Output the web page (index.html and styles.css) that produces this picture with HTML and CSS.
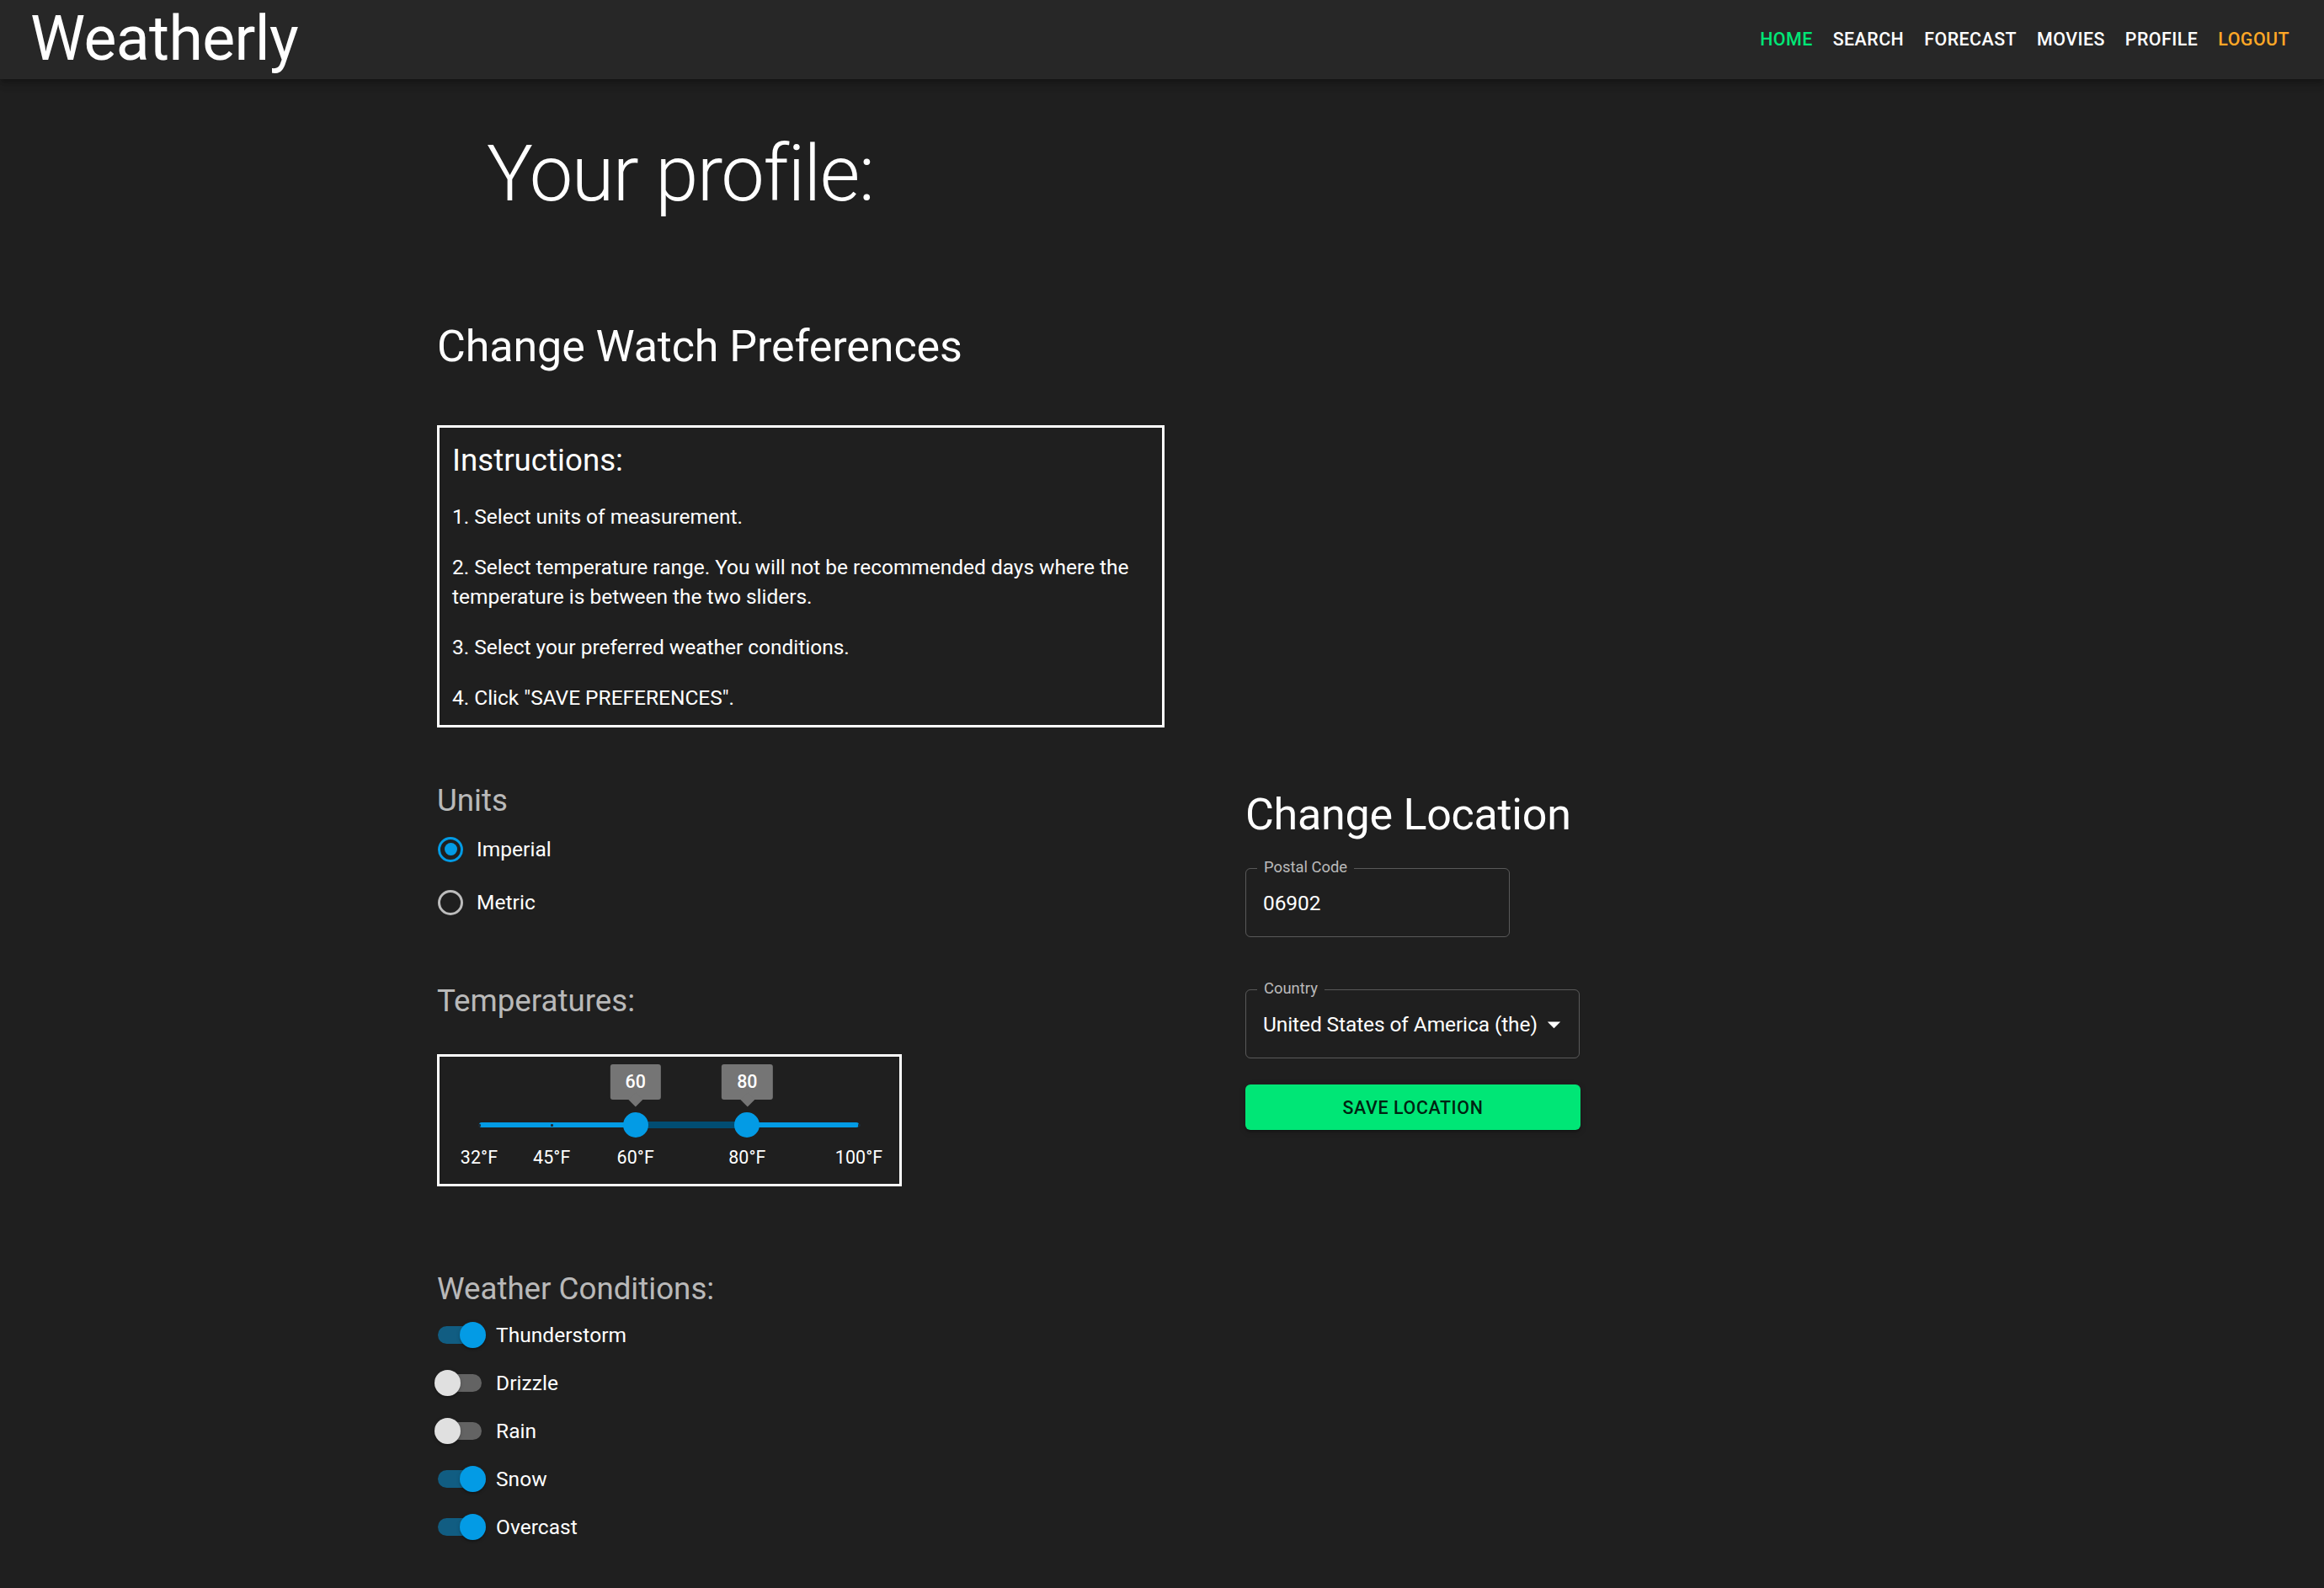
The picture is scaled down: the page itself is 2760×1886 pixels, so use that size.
FILE: index.html
```html
<!DOCTYPE html>
<html lang="en">
<head>
<meta charset="utf-8">
<title>Weatherly</title>
<link rel="stylesheet" href="styles.css">
</head>
<body>
<header class="appbar">
  <div class="brand">Weatherly</div>
  <nav class="nav">
    <a class="nav-link nav-home">HOME</a>
    <a class="nav-link">SEARCH</a>
    <a class="nav-link">FORECAST</a>
    <a class="nav-link">MOVIES</a>
    <a class="nav-link">PROFILE</a>
    <a class="nav-link nav-logout">LOGOUT</a>
  </nav>
</header>
<main class="page">
  <h2 class="profile-title">Your profile:</h2>
  <h4 class="section-title">Change Watch Preferences</h4>
  <div class="instructions">
    <h5 class="instructions-title">Instructions:</h5>
    <p>1. Select units of measurement.</p>
    <p>2. Select temperature range. You will not be recommended days where the temperature is between the two sliders.</p>
    <p>3. Select your preferred weather conditions.</p>
    <p>4. Click "SAVE PREFERENCES".</p>
  </div>
  <div class="columns">
    <div class="col-left">
      <h5 class="group-title">Units</h5>
      <div class="radio-group">
        <label class="radio-row"><span class="radio checked"></span><span class="control-label">Imperial</span></label>
        <label class="radio-row"><span class="radio"></span><span class="control-label">Metric</span></label>
      </div>
      <h5 class="group-title temps-title">Temperatures:</h5>
      <div class="temp-box">
        <div class="slider">
          <span class="rail"></span>
          <span class="track" style="left:41.18%;width:29.41%"></span>
          <span class="mark" style="left:0%"></span>
          <span class="mark" style="left:19.12%"></span>
          <span class="mark" style="left:100%"></span>
          <span class="thumb" style="left:41.18%"><span class="value-label">60</span></span>
          <span class="thumb" style="left:70.59%"><span class="value-label">80</span></span>
          <span class="mark-label" style="left:0%">32°F</span>
          <span class="mark-label" style="left:19.12%">45°F</span>
          <span class="mark-label" style="left:41.18%">60°F</span>
          <span class="mark-label" style="left:70.59%">80°F</span>
          <span class="mark-label" style="left:100%">100°F</span>
        </div>
      </div>
      <h5 class="group-title conditions-title">Weather Conditions:</h5>
      <div class="switch-list">
        <label class="switch-row"><span class="switch on"><span class="switch-track"></span><span class="switch-thumb"></span></span><span class="control-label">Thunderstorm</span></label>
        <label class="switch-row"><span class="switch"><span class="switch-track"></span><span class="switch-thumb"></span></span><span class="control-label">Drizzle</span></label>
        <label class="switch-row"><span class="switch"><span class="switch-track"></span><span class="switch-thumb"></span></span><span class="control-label">Rain</span></label>
        <label class="switch-row"><span class="switch on"><span class="switch-track"></span><span class="switch-thumb"></span></span><span class="control-label">Snow</span></label>
        <label class="switch-row"><span class="switch on"><span class="switch-track"></span><span class="switch-thumb"></span></span><span class="control-label">Overcast</span></label>
      </div>
    </div>
    <div class="col-right">
      <h4 class="section-title location-title">Change Location</h4>
      <div class="field field-postal">
        <span class="field-label">Postal Code</span>
        <span class="field-value">06902</span>
      </div>
      <div class="field field-country">
        <span class="field-label">Country</span>
        <span class="field-value">United States of America (the)</span>
        <svg class="dropdown-icon" viewBox="0 0 24 24" aria-hidden="true"><path d="M7 10l5 5 5-5z" fill="#ffffff"/></svg>
      </div>
      <button class="save-btn">SAVE LOCATION</button>
    </div>
  </div>
</main>
</body>
</html>
```

FILE: styles.css
```css
* {
  box-sizing: border-box;
}

html, body {
  margin: 0;
  padding: 0;
}

body {
  background: #1f1f1f;
  color: #ffffff;
  font-family: Roboto, "Noto Sans", "Liberation Sans", sans-serif;
  min-height: 1886px;
}

h2, h4, h5, p {
  margin: 0;
  font-weight: 400;
}

/* ---------- App bar ---------- */
.appbar {
  height: 94px;
  background: #272727;
  display: flex;
  align-items: center;
  justify-content: space-between;
  padding: 0 29px 0 36px;
  box-shadow: 0 3px 6px -2px rgba(0, 0, 0, 0.25), 0 6px 8px 0 rgba(0, 0, 0, 0.14), 0 2px 15px 0 rgba(0, 0, 0, 0.12);
  position: relative;
  z-index: 2;
}

.brand {
  font-size: 73.4px;
  line-height: 86px;
  font-weight: 400;
  color: #ffffff;
  margin-top: -2px;
  letter-spacing: -0.6px;
}

.nav {
  display: flex;
  align-items: center;
  margin-top: -2px;
}

.nav-link {
  font-size: 21.4px;
  font-weight: 500;
  letter-spacing: 0.45px;
  line-height: 37px;
  padding: 9px 12px;
  color: #ffffff;
  text-transform: uppercase;
}

.nav-home {
  color: #00e676;
}

.nav-logout {
  color: #ffa726;
}

/* ---------- Page ---------- */
.page {
  padding: 58px 0 0 519px;
}

.profile-title {
  font-size: 92px;
  font-weight: 300;
  line-height: 110px;
  margin-left: 59px;
  letter-spacing: -1.5px;
}

.section-title {
  font-size: 52px;
  line-height: 64px;
  font-weight: 400;
  letter-spacing: -0.1px;
}

.page > .section-title {
  margin-top: 118px;
}

.instructions {
  margin-top: 61px;
  width: 864px;
  border: 3px solid #ffffff;
  padding: 14px 15px 15px 15px;
}

.instructions-title {
  font-size: 36.7px;
  line-height: 49px;
  font-weight: 400;
}

.instructions p {
  font-size: 24.5px;
  line-height: 35px;
  margin-top: 25px;
  letter-spacing: -0.02px;
}

/* ---------- Columns ---------- */
.columns {
  display: grid;
  grid-template-columns: 960px 1fr;
  margin-top: 62px;
}

.group-title {
  font-size: 36.7px;
  line-height: 49px;
  font-weight: 400;
  color: rgba(255, 255, 255, 0.7);
}

.radio-group {
  margin-top: 2px;
}

.radio-row {
  display: flex;
  align-items: center;
  height: 63px;
}

.radio {
  width: 30px;
  height: 30px;
  border: 3px solid rgba(255, 255, 255, 0.7);
  border-radius: 50%;
  margin: 0 16px 0 1px;
  display: flex;
  align-items: center;
  justify-content: center;
  flex: none;
}

.radio.checked {
  border-color: #039be5;
}

.radio.checked::after {
  content: "";
  width: 15px;
  height: 15px;
  border-radius: 50%;
  background: #039be5;
}

.control-label {
  font-size: 24.5px;
  line-height: 36px;
  letter-spacing: 0.05px;
}

.switch-row .control-label {
  margin-left: -2px;
}

.temps-title {
  margin-top: 61px;
}

/* ---------- Slider ---------- */
.temp-box {
  margin-top: 39px;
  width: 552px;
  height: 157px;
  border: 3px solid #ffffff;
  padding: 0 48px 0 47px;
}

.slider {
  position: relative;
  height: 151px;
}

.rail {
  position: absolute;
  left: 0;
  right: 0;
  top: 78px;
  height: 6px;
  border-radius: 3px;
  background: #039be5;
}

.track {
  position: absolute;
  top: 77px;
  height: 8px;
  border-radius: 4px;
  background: #014d72;
}

.mark {
  position: absolute;
  top: 79.5px;
  width: 3px;
  height: 3px;
  margin-left: -1.5px;
  border-radius: 1px;
  background: #1f2a33;
}

.thumb {
  position: absolute;
  top: 66px;
  width: 30px;
  height: 30px;
  margin-left: -15px;
  border-radius: 50%;
  background: #039be5;
}

.value-label {
  position: absolute;
  bottom: 45px;
  left: 50%;
  transform: translateX(-50%);
  background: #757575;
  color: #ffffff;
  font-size: 21.4px;
  font-weight: 500;
  line-height: 30px;
  padding: 6px 18px;
  border-radius: 3px;
  white-space: nowrap;
}

.value-label::before {
  content: "";
  position: absolute;
  width: 12px;
  height: 12px;
  background: #757575;
  left: 50%;
  bottom: 0;
  transform: translate(-50%, 50%) rotate(45deg);
}

.mark-label {
  position: absolute;
  top: 105px;
  transform: translateX(-50%);
  font-size: 21.4px;
  line-height: 30.6px;
  color: #ffffff;
  white-space: nowrap;
  letter-spacing: 0.1px;
}

/* ---------- Switches ---------- */
.conditions-title {
  margin-top: 97px;
}

.switch-list {
  margin-top: 2px;
}

.switch-row {
  display: flex;
  align-items: center;
  height: 57px;
  margin-left: -17px;
}

.switch {
  position: relative;
  width: 89px;
  height: 57px;
  flex: none;
}

.switch-track {
  position: absolute;
  left: 18px;
  top: 18px;
  width: 52px;
  height: 21px;
  border-radius: 11px;
  background: #636363;
}

.switch.on .switch-track {
  background: #115d82;
}

.switch-thumb {
  position: absolute;
  left: 14px;
  top: 13px;
  width: 31px;
  height: 31px;
  border-radius: 50%;
  background: #e0e0e0;
  box-shadow: 0 3px 2px -2px rgba(0, 0, 0, 0.2), 0 2px 2px 0 rgba(0, 0, 0, 0.14), 0 1px 5px 0 rgba(0, 0, 0, 0.12);
}

.switch.on .switch-thumb {
  left: 44px;
  background: #039be5;
}

/* ---------- Location ---------- */
.col-right {
  padding-top: 10px;
}

.location-title {
  letter-spacing: -0.25px;
}

.field {
  position: relative;
  height: 82px;
  border: 1px solid rgba(255, 255, 255, 0.26);
  border-radius: 6px;
  display: flex;
  align-items: center;
  padding: 0 10px 0 20px;
}

.field-postal {
  margin-top: 31px;
  width: 314px;
}

.field-country {
  margin-top: 62px;
  width: 397px;
}

.field-label {
  position: absolute;
  left: 13px;
  top: -13px;
  padding: 0 8px;
  background: #1f1f1f;
  font-size: 18.4px;
  line-height: 22px;
  color: rgba(255, 255, 255, 0.7);
  letter-spacing: 0;
}

.field-value {
  font-size: 24.5px;
  line-height: 35px;
  letter-spacing: -0.1px;
  color: #ffffff;
  white-space: nowrap;
}

.dropdown-icon {
  width: 37px;
  height: 37px;
  margin-left: auto;
  margin-right: 1px;
  flex: none;
}

.save-btn {
  display: block;
  margin-top: 31px;
  width: 398px;
  height: 54px;
  border: none;
  border-radius: 6px;
  background: #00e676;
  color: rgba(0, 0, 0, 0.87);
  font-family: Roboto, "Noto Sans", "Liberation Sans", sans-serif;
  font-size: 21.4px;
  font-weight: 500;
  letter-spacing: 0.61px;
  box-shadow: 0 3px 2px -2px rgba(0, 0, 0, 0.2), 0 3px 3px 0 rgba(0, 0, 0, 0.14), 0 2px 8px 0 rgba(0, 0, 0, 0.12);
}
```
